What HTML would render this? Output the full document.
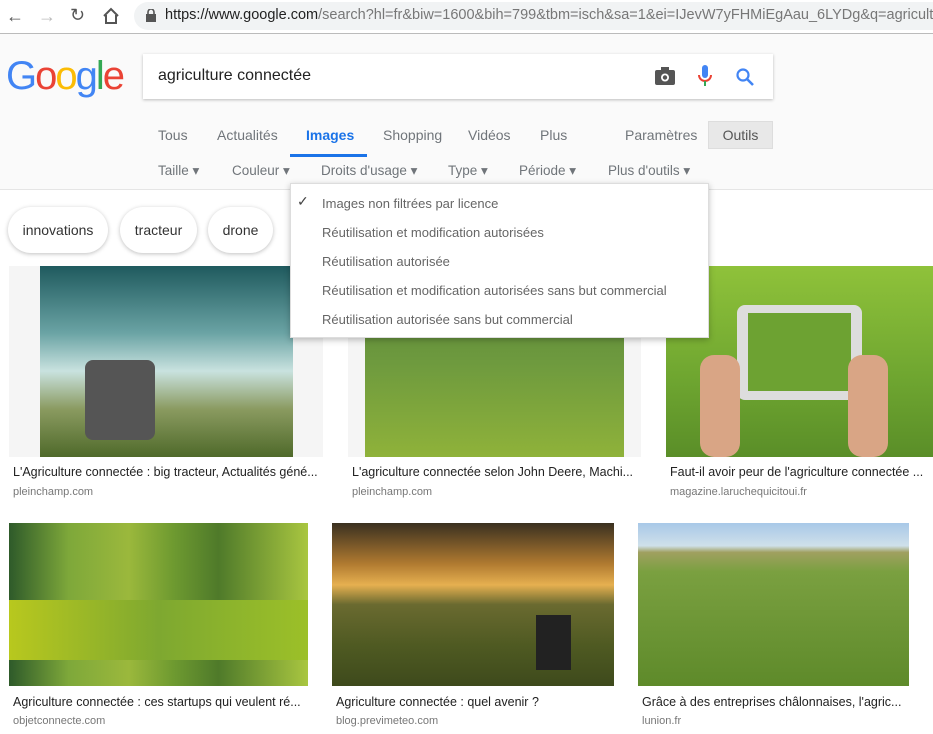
<!DOCTYPE html>
<html><head><meta charset="utf-8"><style>
*{margin:0;padding:0;box-sizing:border-box}
html,body{width:933px;height:734px;overflow:hidden}
body{background:#fff;font-family:"Liberation Sans",Arial,sans-serif;position:relative}
.a{position:absolute}
.nav{color:#70757a;font-size:14px}
.cap{font-size:12.5px;color:#222;white-space:nowrap}
.url{font-size:11px;color:#777}
.dd div{position:absolute;left:31px;font-size:13px;color:#666}
.chip{position:absolute;top:207px;height:46px;border-radius:23px;background:#fff;box-shadow:0 1px 4px rgba(0,0,0,.25);font-size:14px;color:#333;line-height:46px;text-align:center}
</style></head><body>
<div class="a" style="left:0;top:0;width:933px;height:34px;background:#fff;border-bottom:1px solid #bbb"></div>
<div class="a" style="left:6px;top:6px;font-size:18px;color:#555">←</div>
<div class="a" style="left:38px;top:6px;font-size:18px;color:#bbb">→</div>
<div class="a" style="left:70px;top:5px;font-size:18px;color:#555">↻</div>
<svg class="a" style="left:102px;top:7px" width="18" height="18"><path d="M2 9 L9 2 L16 9 M4 8 V16 H14 V8" fill="none" stroke="#555" stroke-width="2"/></svg>
<div class="a" style="left:134px;top:2px;width:799px;height:28px;border-radius:14px 0 0 14px;background:#f1f3f4;overflow:hidden">
<div class="a" style="left:31px;top:5px;font-size:14.5px;color:#777;white-space:nowrap"><span style="color:#222">https://www.google.com</span>/search?hl=fr&amp;biw=1600&amp;bih=799&amp;tbm=isch&amp;sa=1&amp;ei=IJevW7yFHMiEgAau_6LYDg&amp;q=agriculture</div>
</div>
<svg class="a" style="left:146px;top:9px" width="10" height="13"><rect x="0" y="5" width="10" height="8" fill="#555"/><path d="M2 6V3a3 3 0 0 1 6 0v3" fill="none" stroke="#555" stroke-width="1.6"/></svg>
<div class="a" style="left:0;top:34px;width:933px;height:156px;background:#fafafa;border-bottom:1px solid #e5e5e5"></div>
<div class="a" style="left:6px;top:54px;font-size:40px;letter-spacing:-2px"><span style="color:#4285f4">G</span><span style="color:#ea4335">o</span><span style="color:#fbbc05">o</span><span style="color:#4285f4">g</span><span style="color:#34a853">l</span><span style="color:#ea4335">e</span></div>
<div class="a" style="left:143px;top:54px;width:630px;height:45px;background:#fff;box-shadow:0 1px 3px rgba(0,0,0,.25)"></div>
<div class="a" style="left:158px;top:67px;font-size:16px;color:#222">agriculture connectée</div>
<svg class="a" style="left:654px;top:66px" width="22" height="20"><rect x="1" y="4" width="20" height="15" rx="2" fill="#555"/><rect x="7" y="1" width="8" height="4" fill="#555"/><circle cx="11" cy="11.5" r="4" fill="#fff"/><circle cx="11" cy="11.5" r="2.2" fill="#555"/></svg>
<svg class="a" style="left:697px;top:64px" width="16" height="24"><rect x="5" y="1" width="6" height="13" rx="3" fill="#4285f4"/><path d="M2 11a6 6 0 0 0 12 0" fill="none" stroke="#ea4335" stroke-width="2"/><path d="M8 17v5" stroke="#34a853" stroke-width="2"/></svg>
<svg class="a" style="left:735px;top:67px" width="20" height="20"><circle cx="8" cy="8" r="5.5" fill="none" stroke="#4285f4" stroke-width="2.2"/><path d="M12 12l6 6" stroke="#4285f4" stroke-width="2.6"/></svg>
<div class="a nav" style="left:158px;top:127px">Tous</div>
<div class="a nav" style="left:217px;top:127px">Actualités</div>
<div class="a" style="left:306px;top:127px;font-size:14px;color:#1a73e8;font-weight:bold">Images</div>
<div class="a" style="left:290px;top:154px;width:77px;height:3px;background:#1a73e8"></div>
<div class="a nav" style="left:383px;top:127px">Shopping</div>
<div class="a nav" style="left:468px;top:127px">Vidéos</div>
<div class="a nav" style="left:540px;top:127px">Plus</div>
<div class="a nav" style="left:625px;top:127px">Paramètres</div>
<div class="a" style="left:708px;top:121px;width:65px;height:28px;background:#e8e8e8;border:1px solid #ddd;font-size:14px;color:#555;text-align:center;line-height:26px">Outils</div>
<div class="a nav" style="left:158px;top:163px;font-size:13.5px">Taille ▾</div>
<div class="a nav" style="left:232px;top:163px;font-size:13.5px">Couleur ▾</div>
<div class="a nav" style="left:321px;top:163px;font-size:13.5px">Droits d'usage ▾</div>
<div class="a nav" style="left:448px;top:163px;font-size:13.5px">Type ▾</div>
<div class="a nav" style="left:519px;top:163px;font-size:13.5px">Période ▾</div>
<div class="a nav" style="left:608px;top:163px;font-size:13.5px">Plus d'outils ▾</div>
<div class="chip" style="left:8px;width:100px">innovations</div>
<div class="chip" style="left:120px;width:77px">tracteur</div>
<div class="chip" style="left:208px;width:65px">drone</div>
<div class="a" style="left:9px;top:266px;width:314px;height:191px;background:#f5f5f5"></div>
<div class="a" style="left:40px;top:266px;width:253px;height:191px;background:linear-gradient(180deg,#1f5a5e 0%,#6aa3a4 35%,#c9e2df 55%,#8a9a60 75%,#4f6a2a 100%)"></div>
<div class="a" style="left:85px;top:360px;width:70px;height:80px;background:#555;border-radius:8px"></div>
<div class="a" style="left:348px;top:266px;width:293px;height:191px;background:#f5f5f5"></div>
<div class="a" style="left:365px;top:300px;width:259px;height:157px;background:linear-gradient(180deg,#5e8a3a 0%,#6e9a3e 40%,#8fb23a 100%)"></div>
<div class="a" style="left:666px;top:266px;width:267px;height:191px;background:linear-gradient(180deg,#8fc23a,#6ea530 60%,#5a8e28)"></div>
<div class="a" style="left:737px;top:305px;width:125px;height:95px;background:#ddd;border-radius:8px"></div>
<div class="a" style="left:748px;top:313px;width:103px;height:78px;background:#6da232"></div>
<div class="a" style="left:700px;top:355px;width:40px;height:102px;background:#d9a585;border-radius:14px"></div>
<div class="a" style="left:848px;top:355px;width:40px;height:102px;background:#d9a585;border-radius:14px"></div>
<div class="a cap" style="left:13px;top:465px">L'Agriculture connectée : big tracteur, Actualités géné...</div>
<div class="a url" style="left:13px;top:486px">pleinchamp.com</div>
<div class="a cap" style="left:352px;top:465px">L'agriculture connectée selon John Deere, Machi...</div>
<div class="a url" style="left:352px;top:486px">pleinchamp.com</div>
<div class="a cap" style="left:670px;top:465px">Faut-il avoir peur de l'agriculture connectée ...</div>
<div class="a url" style="left:670px;top:486px">magazine.laruchequicitoui.fr</div>
<div class="a dd" style="left:290px;top:183px;width:419px;height:155px;background:#fff;box-shadow:0 2px 6px rgba(0,0,0,.25);border:1px solid #ddd">
<span style="position:absolute;left:6px;top:9px;font-size:14px;color:#444">✓</span>
<div style="top:12px">Images non filtrées par licence</div>
<div style="top:41px">Réutilisation et modification autorisées</div>
<div style="top:70px">Réutilisation autorisée</div>
<div style="top:99px">Réutilisation et modification autorisées sans but commercial</div>
<div style="top:128px">Réutilisation autorisée sans but commercial</div>
</div>
<div class="a" style="left:9px;top:523px;width:299px;height:163px;background:linear-gradient(90deg,#2e5a2a 0,#7ea83a 20%,#9bb83c 40%,#6e9a30 55%,#4f7a2a 70%,#a9c640 100%)"></div>
<div class="a" style="left:9px;top:600px;width:299px;height:60px;background:linear-gradient(90deg,#b8c81e,#7ea830 50%,#9cc028)"></div>
<div class="a" style="left:332px;top:523px;width:282px;height:163px;background:linear-gradient(180deg,#3a3020 0%,#b07a30 25%,#e6b050 38%,#6a6a30 50%,#4f5a22 75%,#3e4a1c 100%)"></div>
<div class="a" style="left:536px;top:615px;width:35px;height:55px;background:#222"></div>
<div class="a" style="left:638px;top:523px;width:271px;height:163px;background:linear-gradient(180deg,#a8c8e8 0%,#cfe0ea 14%,#a0a060 18%,#7aa040 30%,#5e8a2a 100%)"></div>
<div class="a cap" style="left:13px;top:695px">Agriculture connectée : ces startups qui veulent ré...</div>
<div class="a url" style="left:13px;top:715px">objetconnecte.com</div>
<div class="a cap" style="left:336px;top:695px">Agriculture connectée : quel avenir ?</div>
<div class="a url" style="left:336px;top:715px">blog.previmeteo.com</div>
<div class="a cap" style="left:642px;top:695px">Grâce à des entreprises châlonnaises, l'agric...</div>
<div class="a url" style="left:642px;top:715px">lunion.fr</div>
</body></html>
